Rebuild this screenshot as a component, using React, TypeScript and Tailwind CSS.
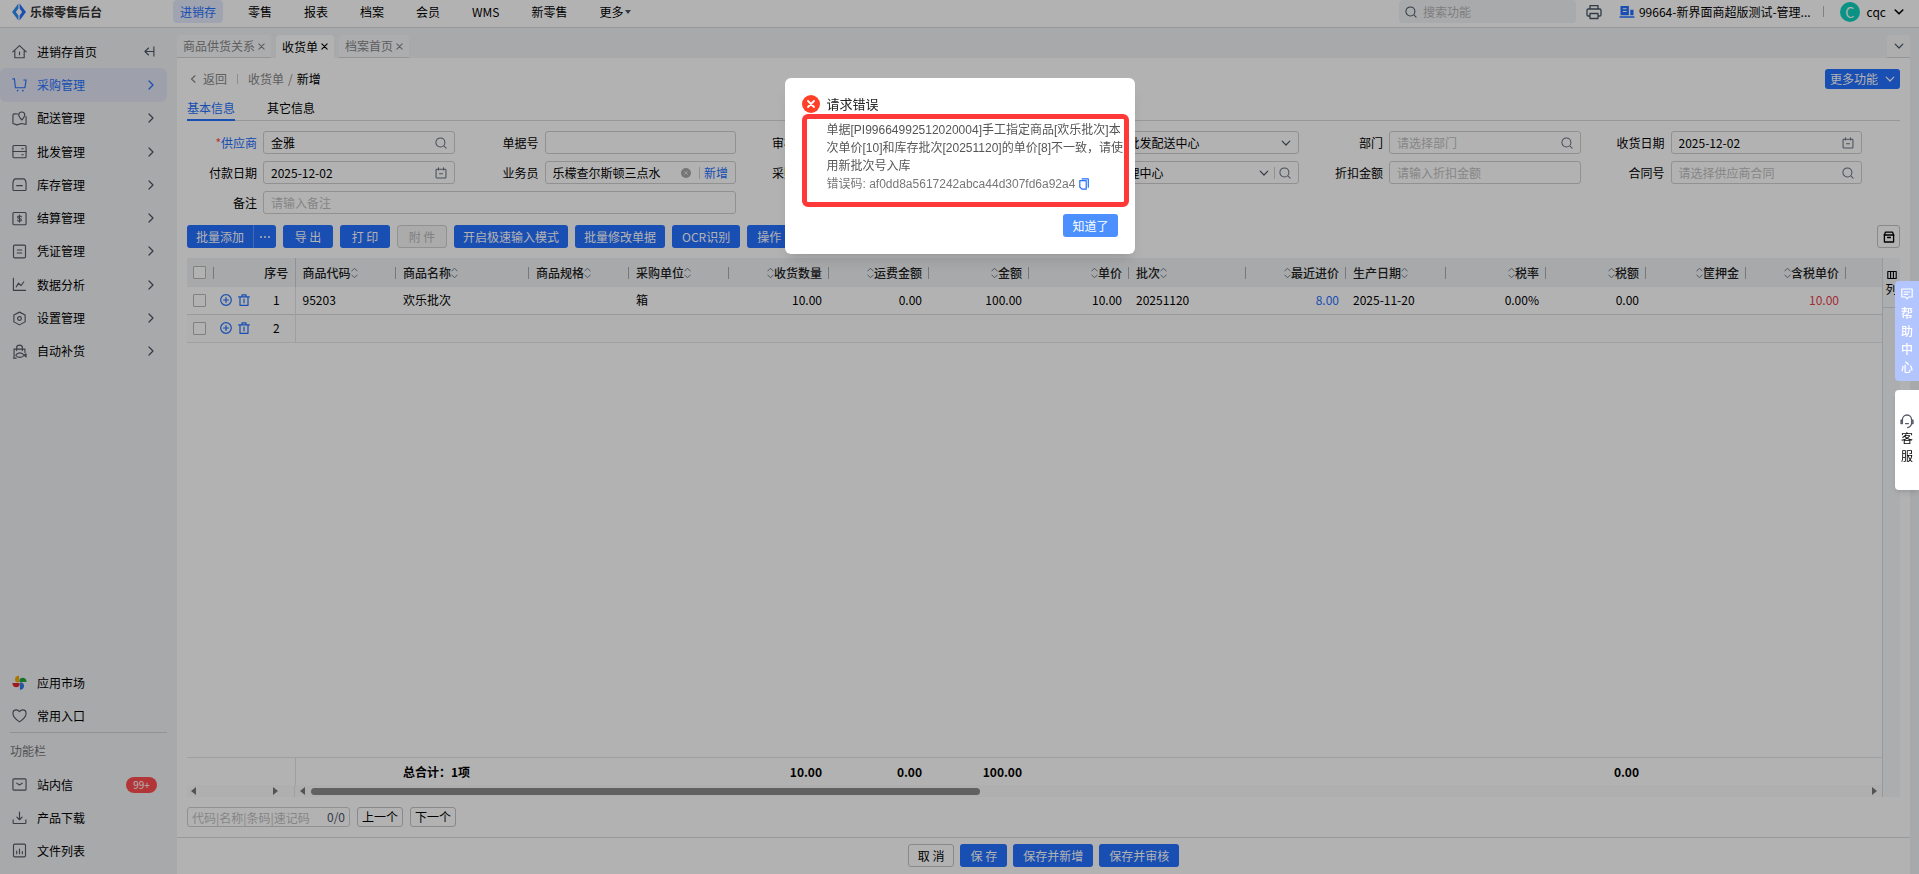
import type { ReactNode } from "react";
import clsx from "clsx";

type IconProps = { className?: string };

type SvgProps = IconProps & { children: ReactNode; box?: string; width?: number };

function Svg({ className, children, box = "0 0 16 16", width = 1.2 }: SvgProps) {
  return (
    <svg
      viewBox={box}
      fill="none"
      stroke="currentColor"
      strokeWidth={width}
      strokeLinecap="round"
      strokeLinejoin="round"
      className={clsx("shrink-0", className)}
      aria-hidden="true"
    >
      {children}
    </svg>
  );
}

const HomeIcon = ({ className }: IconProps) => (
  <Svg className={className}>
    <path d="M.8 8.4 8 1.8l7.200 6.600M3 7.200v7.400h10V7.200M8 8.600v2.800" />
  </Svg>
);
const CartIcon = ({ className }: IconProps) => (
  <Svg className={className}>
    <path d="M.8 2h1.800l1 9.400h10.200L15 3.200h-2.400" />
    <path d="M6 14.400v.1M11.600 14.400v.1" strokeWidth="1.800" />
  </Svg>
);
const MapIcon = ({ className }: IconProps) => (
  <Svg className={className}>
    <path d="M6 3.2 2.400 3C1.400 3 1 3.600 1 4.400v9l4.200 1.400 5-1.400 4.800 1V6" />
    <path d="M10.400 9.600C8.200 7.200 7.200 5.600 7.200 4.200a3.200 3.200 0 0 1 6.400 0c0 1.400-1 3-3.200 5.400Z" />
  </Svg>
);
const ServerIcon = ({ className }: IconProps) => (
  <Svg className={className}>
    <rect x="1" y="1.6" width="14" height="13" rx="1" />
    <path d="M1 8h14M10.500 5H12M10.500 11.500H12" />
  </Svg>
);
const BoxIcon = ({ className }: IconProps) => (
  <Svg className={className}>
    <path d="M1 6c.6-2.600 1.400-4 2.600-4h8.800C13.600 2 14.400 3.400 15 6v7.200c0 .8-.4 1.200-1.200 1.200H2.200c-.8 0-1.200-.4-1.200-1.200ZM5 9.200h6" />
  </Svg>
);
const MoneyIcon = ({ className }: IconProps) => (
  <Svg className={className}>
    <rect x="1" y="1.6" width="14" height="13" rx="1" />
    <path d="M10 6.200C9.600 5.500 9 5.300 8 5.300c-1.200 0-2 .5-2 1.300 0 2 4 .8 4 2.900 0 .8-.8 1.300-2 1.300-1 0-1.700-.3-2-1M8 4.300v7.500" />
  </Svg>
);
const NoteIcon = ({ className }: IconProps) => (
  <Svg className={className}>
    <rect x="1.6" y="1.2" width="12.8" height="13.6" rx="1.2" />
    <path d="M5.600 6.400h4.800M5.600 9.600h4.800" />
  </Svg>
);
const TrendIcon = ({ className }: IconProps) => (
  <Svg className={className}>
    <path d="M1.500 1.500v12.700h13M4.500 10.500l2.500-4 2.500 2.800 3-4" />
  </Svg>
);
const GearIcon = ({ className }: IconProps) => (
  <Svg className={className}>
    <path d="M8 1.200 14 4.200v7.400L8 14.800l-6-3.200V4.200Z" />
    <circle cx="8" cy="8" r="2" />
  </Svg>
);
const BagIcon = ({ className }: IconProps) => (
  <Svg className={className}>
    <path d="M2.200 14V5.400h11.600V9M5 7V3.600C5 2.200 6.200 1.200 8 1.200s3 1 3 2.400V7" />
    <path d="M4 12c2-3.400 6.500-3.400 9 0-2.500 3-7 3-9 0ZM13 12l2-1.600v3.400ZM1.500 15h3" />
  </Svg>
);
const HeartIcon = ({ className }: IconProps) => (
  <Svg className={className}>
    <path d="M8 14.800C3.200 11.600 1 8.800 1 5.800 1 3.600 2.600 2 4.600 2 6 2 7.200 2.700 8 4c.8-1.300 2-2 3.400-2C13.400 2 15 3.600 15 5.800c0 3-2.200 5.800-7 9Z" />
  </Svg>
);
const MailIcon = ({ className }: IconProps) => (
  <Svg className={className}>
    <rect x="1" y="2" width="14" height="12" rx="1" />
    <path d="m5 6.500 3 2 3-2" />
  </Svg>
);
const DownloadIcon = ({ className }: IconProps) => (
  <Svg className={className}>
    <path d="M8 2.200V10M5.200 7.600 8 10.400l2.800-2.800M1.200 10.400v3.200c0 .5.300.8.800.8h12c.5 0 .8-.3.800-.8v-3.200" />
  </Svg>
);
const FileChartIcon = ({ className }: IconProps) => (
  <Svg className={className}>
    <rect x="1.6" y="1.2" width="12.8" height="13.6" rx="1.2" />
    <path d="M5 8.500v3M8 6.500v5M11 9v2.500" />
  </Svg>
);
const MarketIcon = ({ className }: IconProps) => (
  <svg viewBox="0 0 16 16" className={clsx("shrink-0", className)} aria-hidden="true">
    <path d="M7.600 7.800V.8C4.600.8 3.200 2.600 3.200 4.800c0 1.600.8 2.600 1.800 3Z" fill="#f5a800" />
    <path d="M8 7.400h7.600c0-3-2-4.600-4.200-4.600C9.400 2.800 8 4 8 5.600Z" fill="#1fa83a" />
    <path d="M8.400 8v7.600c2.800 0 4.400-1.800 4.400-4 0-1.800-1-3.200-2.400-3.600Z" fill="#2f7be8" />
    <path d="M8 8.400H.4c0 2.800 1.800 4.600 4.200 4.600C6.600 13 8 11.800 8 10.200Z" fill="#e3262c" />
  </svg>
);
const SearchIcon = ({ className }: IconProps) => (
  <Svg className={className} width={1.4}>
    <circle cx="7.200" cy="7.200" r="6" />
    <path d="m12 12 2.800 2.800" />
  </Svg>
);
const CalendarIcon = ({ className }: IconProps) => (
  <Svg className={className} width={1.4}>
    <rect x="1.4" y="3" width="13.2" height="11.6" rx="1" />
    <path d="M4.600 1v3M11.400 1v3M6 9h4" />
  </Svg>
);
const ChevronDown = ({ className }: IconProps) => (
  <Svg className={className} box="0 0 10 10">
    <path d="M1.200 3.200 5 7l3.800-3.800" />
  </Svg>
);
const ChevronRight = ({ className }: IconProps) => (
  <Svg className={className} box="0 0 6 10">
    <path d="M1 1l4 4-4 4" />
  </Svg>
);
const CloseIcon = ({ className }: IconProps) => (
  <Svg className={className} box="0 0 8 8" width={1.3}>
    <path d="m1 1 6 6M7 1 1 7" />
  </Svg>
);
const SortIcon = () => (
  <Svg className="h-[12px] w-[7px] text-gray-500" box="0 0 7 12" width={0.9}>
    <path d="M.8 4 3.500 1.200 6.200 4M.8 8l2.700 2.800L6.200 8" />
  </Svg>
);
const PlusCircleIcon = () => (
  <Svg className="size-[12px]" box="0 0 12 12">
    <circle cx="6" cy="6" r="5.300" />
    <path d="M6 3.600v4.800M3.600 6h4.800" />
  </Svg>
);
const TrashIcon = () => (
  <Svg className="size-[12px]" box="0 0 12 12">
    <path d="M.6 2.800h10.800M4 2.600V.8h4v1.800M2 3v8.300h8V3M6 5.200v3.600" />
  </Svg>
);

const NAV = ["进销存", "零售", "报表", "档案", "会员", "WMS", "新零售"];

const MENU = [
  { label: "采购管理", Icon: CartIcon, active: true },
  { label: "配送管理", Icon: MapIcon },
  { label: "批发管理", Icon: ServerIcon },
  { label: "库存管理", Icon: BoxIcon },
  { label: "结算管理", Icon: MoneyIcon },
  { label: "凭证管理", Icon: NoteIcon },
  { label: "数据分析", Icon: TrendIcon },
  { label: "设置管理", Icon: GearIcon },
  { label: "自动补货", Icon: BagIcon },
];

const PAGE_TABS = [
  { label: "商品供货关系" },
  { label: "收货单", active: true },
  { label: "档案首页" },
];

type Column = {
  title: string;
  width: string;
  align?: "right";
  value?: string;
  total?: string;
  tone?: string;
};

const COLUMNS: Column[] = [
  { title: "商品代码", width: "w-[101px]", value: "95203" },
  { title: "商品名称", width: "w-[133px]", value: "欢乐批次", total: "总合计：1项" },
  { title: "商品规格", width: "w-[100px]" },
  { title: "采购单位", width: "w-[100px]", value: "箱" },
  { title: "收货数量", width: "w-[100px]", align: "right", value: "10.00", total: "10.00" },
  { title: "运费金额", width: "w-[100px]", align: "right", value: "0.00", total: "0.00" },
  { title: "金额", width: "w-[100px]", align: "right", value: "100.00", total: "100.00" },
  { title: "单价", width: "w-[100px]", align: "right", value: "10.00" },
  { title: "批次", width: "w-[117px]", value: "20251120" },
  { title: "最近进价", width: "w-[100px]", align: "right", value: "8.00", tone: "text-[#2470ff]" },
  { title: "生产日期", width: "w-[100px]", value: "2025-11-20" },
  { title: "税率", width: "w-[100px]", align: "right", value: "0.00%" },
  { title: "税额", width: "w-[100px]", align: "right", value: "0.00", total: "0.00" },
  { title: "筐押金", width: "w-[100px]", align: "right" },
  { title: "含税单价", width: "w-[100px]", align: "right", value: "10.00", tone: "text-[#e8404a]" },
];

function TopBar() {
  return (
    <header className="flex h-7 shrink-0 items-center border-b border-[#d9dbdf] bg-white pb-1">
      <div className="flex w-[173px] shrink-0 items-center gap-1 pl-3">
        <svg viewBox="0 0 14 18" className="h-[18px] w-[14px]" aria-hidden="true">
          <path d="M6.400.4v5.200L3.800 9l2.600 3.400v5.200L.6 9.800a1.200 1.200 0 0 1 0-1.600Z" fill="#2f8bf5" />
          <path d="M7.600.4v5.200L10.200 9l-2.600 3.400v5.200l5.800-7.800a1.200 1.200 0 0 0 0-1.600Z" fill="#2470ff" />
        </svg>
        <span className="font-bold text-[#333]">乐檬零售后台</span>
      </div>
      <nav className="flex items-center gap-[18px]">
        {NAV.map((item, index) => (
          <a
            key={item}
            href="#"
            className={clsx(
              "flex h-[23px] items-center rounded px-[7px]",
              index === 0 && "bg-[#e4ebfd] text-[#2470ff]",
            )}
          >
            {item}
          </a>
        ))}
        <button type="button" className="flex h-[23px] items-center gap-px px-[7px]">
          更多
          <svg viewBox="0 0 6 4" className="h-1 w-1.5 fill-gray-600" aria-hidden="true">
            <path d="M0 0h6L3 4Z" />
          </svg>
        </button>
      </nav>
      <div className="ml-auto flex items-center pr-[15px]">
        <div className="flex h-[23px] w-[177px] items-center gap-1.5 rounded bg-[#f2f4f7] px-1.5">
          <SearchIcon className="size-[12px] text-gray-600" />
          <input
            aria-label="搜索功能"
            placeholder="搜索功能"
            className="h-full min-w-0 flex-1 bg-transparent outline-none placeholder:text-[#b5b5b5]"
          />
        </div>
        <Svg className="ml-[10px] size-4 text-gray-600" width={1.3}>
          <path d="M4 5V1.600h8V5M4 12H2.200C1.400 12 1 11.600 1 10.800V6.200C1 5.400 1.400 5 2.200 5h11.600c.8 0 1.200.4 1.200 1.200v4.600c0 .8-.4 1.200-1.200 1.200H12M4 9.500h8v5H4Z" />
        </Svg>
        <svg viewBox="0 0 16 14" className="ml-[17px] h-[13px] w-4" aria-hidden="true">
          <path d="M1 1h9v10H1ZM11.500 5H15v6h-3.500ZM0 12h16v1.600H0Z" fill="#2470ff" />
          <path d="M3.500 4h4M3.500 7h4" stroke="#fff" strokeWidth="1.2" />
        </svg>
        <span className="ml-1 whitespace-nowrap">99664-新界面商超版测试-管理...</span>
        <span className="ml-3 h-[11px] w-px bg-[#bbb]" />
        <span className="ml-4 flex size-5 items-center justify-center rounded-full bg-[#0fd3bd] text-sm text-white">
          C
        </span>
        <button type="button" className="ml-[7px] flex items-center gap-2">
          cqc
          <Svg className="size-[10px]" box="0 0 10 10" width={1.6}>
            <path d="M1.200 3 5 6.800 8.800 3" />
          </Svg>
        </button>
      </div>
    </header>
  );
}

function Sidebar() {
  return (
    <aside className="flex w-[177px] shrink-0 flex-col pt-[7px] pr-[10px] pb-[7px]">
      <nav className="flex h-[333px] flex-col">
        <a href="#" className="flex flex-1 items-center pr-3 pl-3">
          <HomeIcon className="size-[15px] text-[#555866]" />
          <span className="ml-[10px]">进销存首页</span>
          <Svg className="ml-auto size-[11px] text-gray-600" box="0 0 12 12">
            <path d="M5 2.200 1 6l4 3.800M1 6h9.800M10.800 1v10" />
          </Svg>
        </a>
        {MENU.map(({ label, Icon, active }) => (
          <a
            key={label}
            href="#"
            className={clsx(
              "flex flex-1 items-center rounded-md pr-[13px] pl-3",
              active ? "bg-[#e2e7f5] text-[#2470ff]" : "text-black",
            )}
          >
            <Icon className={clsx("size-[15px]", !active && "text-[#555866]")} />
            <span className="ml-[10px]">{label}</span>
            <ChevronRight className={clsx("ml-auto h-[10px] w-1.5", !active && "text-gray-600")} />
          </a>
        ))}
      </nav>
      <div className="mt-auto flex flex-col">
        <a href="#" className="flex h-[33px] items-center gap-[10px] pl-3">
          <MarketIcon className="size-[15px]" />
          应用市场
        </a>
        <a href="#" className="flex h-[33px] items-center gap-[10px] pl-3">
          <HeartIcon className="size-[15px] text-[#555866]" />
          常用入口
        </a>
        <h2 className="ml-[10px] flex h-9 items-center border-t border-[#cfd1d4] text-[#777]">功能栏</h2>
        <a href="#" className="flex h-[33px] items-center gap-[10px] pr-[10px] pl-3">
          <MailIcon className="size-[15px] text-[#555866]" />
          站内信
          <span className="ml-auto flex h-4 w-[31px] items-center justify-center rounded-full bg-[#ff4d4f] text-[10px] text-white">
            99+
          </span>
        </a>
        <a href="#" className="flex h-[33px] items-center gap-[10px] pl-3">
          <DownloadIcon className="size-[15px] text-[#555866]" />
          产品下载
        </a>
        <a href="#" className="flex h-[33px] items-center gap-[10px] pl-3">
          <FileChartIcon className="size-[15px] text-[#555866]" />
          文件列表
        </a>
      </div>
    </aside>
  );
}

type FieldProps = {
  id: string;
  label: string;
  value?: string;
  placeholder?: string;
  required?: boolean;
  options?: boolean;
  wide?: boolean;
  children?: ReactNode;
};

function Field({ id, label, value, placeholder, required, options, wide, children }: FieldProps) {
  return (
    <div className={clsx("flex h-[23px] items-center pr-[14px]", wide && "col-span-2")}>
      <label htmlFor={id} className={clsx("w-[70px] shrink-0 text-right", required && "text-[#2470ff]")}>
        {required && <span className="text-[#ff4d4f]">*</span>}
        {label}
      </label>
      <div className="ml-1.5 flex h-full min-w-0 flex-1 items-center gap-1 rounded-[3px] border border-[#d0d0d0] pr-[7px] pl-[7px]">
        {options ? (
          <select id={id} className="h-full min-w-0 flex-1 appearance-none bg-transparent outline-none">
            <option>{value}</option>
          </select>
        ) : (
          <input
            id={id}
            defaultValue={value}
            placeholder={placeholder}
            className="h-full min-w-0 flex-1 bg-transparent outline-none placeholder:text-[#bfbfbf]"
          />
        )}
        {children}
      </div>
    </div>
  );
}

function ReceiptForm() {
  return (
    <form className="mt-[10px] grid grid-cols-6 gap-y-[7px] pr-6">
      <Field id="supplier" label="供应商" value="金雅" required>
        <SearchIcon className="size-[12px] text-gray-500" />
      </Field>
      <Field id="billNo" label="单据号" />
      <Field id="auditDate" label="审核日期" />
      <Field id="warehouse" label="收货门店" value="总批发配送中心" options>
        <ChevronDown className="size-[10px] text-gray-600" />
      </Field>
      <Field id="department" label="部门" placeholder="请选择部门">
        <SearchIcon className="size-[12px] text-gray-500" />
      </Field>
      <Field id="receiveDate" label="收货日期" value="2025-12-02">
        <CalendarIcon className="size-[12px] text-gray-500" />
      </Field>
      <Field id="payDate" label="付款日期" value="2025-12-02">
        <CalendarIcon className="size-[12px] text-gray-500" />
      </Field>
      <Field id="salesman" label="业务员" value="乐檬查尔斯顿三点水">
        <button
          type="button"
          aria-label="清除"
          className="flex size-[10px] items-center justify-center rounded-full bg-[#aaa] text-white"
        >
          <CloseIcon className="size-1" />
        </button>
        <span className="ml-1 h-3 w-px bg-[#d0d0d0]" />
        <button type="button" className="text-[#2470ff]">新增</button>
      </Field>
      <Field id="purchaseOrder" label="采购订单" />
      <Field id="store" label="仓库" value="管理中心" options>
        <ChevronDown className="size-[10px] text-gray-600" />
        <span className="ml-px h-3 w-px bg-[#d0d0d0]" />
        <SearchIcon className="size-[12px] text-gray-500" />
      </Field>
      <Field id="discount" label="折扣金额" placeholder="请输入折扣金额" />
      <Field id="contract" label="合同号" placeholder="请选择供应商合同">
        <SearchIcon className="size-[12px] text-gray-500" />
      </Field>
      <Field id="remark" label="备注" placeholder="请输入备注" wide />
    </form>
  );
}

function Toolbar() {
  const primary = "h-[23px] rounded-[3px] bg-[#2470ff] text-white";
  return (
    <div className="mt-[11px] flex gap-[7px]">
      <div className="flex">
        <button type="button" className="h-[23px] rounded-l-[3px] bg-[#2470ff] px-[9px] text-white">
          批量添加
        </button>
        <button
          type="button"
          aria-label="更多添加方式"
          className="flex h-[23px] w-[23px] items-center justify-center gap-0.5 rounded-r-[3px] border-l border-[#5e97ff] bg-[#2470ff]"
        >
          <i className="size-0.5 rounded-full bg-white" />
          <i className="size-0.5 rounded-full bg-white" />
          <i className="size-0.5 rounded-full bg-white" />
        </button>
      </div>
      <button type="button" className={clsx(primary, "w-[50px]")}>导 出</button>
      <button type="button" className={clsx(primary, "w-[50px]")}>打 印</button>
      <button
        type="button"
        disabled
        className="h-[23px] w-[50px] rounded-[3px] border border-[#d0d0d0] bg-[#f5f5f5] text-[#b8b8b8]"
      >
        附 件
      </button>
      <button type="button" className={clsx(primary, "px-[9px]")}>开启极速输入模式</button>
      <button type="button" className={clsx(primary, "px-[9px]")}>批量修改单据</button>
      <button type="button" className={clsx(primary, "px-[10px]")}>OCR识别</button>
      <button type="button" className={clsx(primary, "flex items-center gap-2 px-[10px]")}>
        操作
        <ChevronDown className="size-[10px]" />
      </button>
      <button
        type="button"
        aria-label="归档"
        className="ml-auto flex h-[23px] w-[23px] items-center justify-center rounded-[3px] border border-[#c4c4c4]"
      >
        <Svg className="size-[12px]" box="0 0 12 12" width={1.3}>
          <path d="M1 4h10M1.400 4v7h9.200V4l-1-2.800H2.400ZM4.600 6.500h2.800" />
        </Svg>
      </button>
    </div>
  );
}

const GridCols = () => (
  <colgroup>
    <col className="w-[27px]" />
    <col className="w-[44px]" />
    <col className="w-[37px]" />
    {COLUMNS.map((column) => (
      <col key={column.title} className={column.width} />
    ))}
    <col />
  </colgroup>
);

const CHECKBOX = "block size-[13px] appearance-none rounded-[1px] border border-[#b8b8b8] bg-white";

function RowHead({ index }: { index: number }) {
  return (
    <>
      <td className="pl-1.5">
        <input type="checkbox" aria-label={`选择第${index}行`} className={CHECKBOX} />
      </td>
      <td>
        <div className="flex items-center gap-1.5 pl-1.5 text-[#2470ff]">
          <button type="button" aria-label="添加行"><PlusCircleIcon /></button>
          <button type="button" aria-label="删除行"><TrashIcon /></button>
        </div>
      </td>
      <td className="border-r border-[#e2e4e8] text-center">{index}</td>
    </>
  );
}

function ItemTable() {
  return (
    <table className="w-full table-fixed border-collapse">
      <GridCols />
      <thead>
        <tr className="h-[29px] bg-[#f0f2f5] text-[#222]">
          <th className="pl-1.5">
            <div className="flex items-center justify-between">
              <input type="checkbox" aria-label="全选" className={CHECKBOX} />
              <span className="h-3 w-px bg-[#a9adb5]" />
            </div>
          </th>
          <th />
          <th className="border-r border-[#cdd0d6] font-medium">序号</th>
          {COLUMNS.map(({ title, align }) => (
            <th key={title} className="pl-[7px] font-medium">
              <div className={clsx("flex items-center", align && "justify-end")}>
                {align && <SortIcon />}
                {title}
                {!align && <SortIcon />}
                <span className={clsx("h-3 w-px bg-[#a9adb5]", align ? "ml-1.5" : "ml-auto")} />
              </div>
            </th>
          ))}
          <th />
        </tr>
      </thead>
      <tbody>
        <tr className="h-[27px] border-b border-[#d9dbdf]">
          <RowHead index={1} />
          {COLUMNS.map(({ title, align, value, tone }) => (
            <td key={title} className={clsx("px-[7px]", align && "text-right", tone)}>
              {value}
            </td>
          ))}
          <td />
        </tr>
        <tr className="h-[28px] border-b border-[#e6e7ea] bg-[#fcfcfc]">
          <RowHead index={2} />
          <td colSpan={COLUMNS.length + 1} />
        </tr>
      </tbody>
    </table>
  );
}

const Arrow = ({ left }: { left?: boolean }) => (
  <svg viewBox="0 0 5 8" className="h-2 w-[5px] shrink-0 fill-[#777]" aria-hidden="true">
    <path d={left ? "M5 0v8L0 4Z" : "M0 0v8l5-4Z"} />
  </svg>
);

function TotalRow() {
  return (
    <div className="mt-auto border-t border-[#e2e4e8]">
      <table className="w-full table-fixed border-collapse">
        <GridCols />
        <tbody>
          <tr className="h-[27px] font-bold">
            <td colSpan={3} className="border-r border-[#e2e4e8]" />
            {COLUMNS.map(({ title, align, total }) => (
              <td key={title} className={clsx("px-[7px] whitespace-nowrap", align && "text-right")}>
                {total}
              </td>
            ))}
            <td />
          </tr>
        </tbody>
      </table>
      <div className="flex h-3 items-center bg-[#fbfbfb]">
        <div className="flex h-full w-[108px] shrink-0 items-center justify-between border-r border-[#e2e4e8] pr-4 pl-1">
          <Arrow left />
          <Arrow />
        </div>
        <div className="flex flex-1 items-center pr-[5px] pl-[5px]">
          <Arrow left />
          <div className="mx-1.5 flex-1">
            <div className="h-[7px] w-[43%] rounded-full bg-[#8b8b8b]" />
          </div>
          <Arrow />
        </div>
      </div>
    </div>
  );
}

function Finder() {
  const step = "h-5 rounded-[3px] border border-[#c4c4c4] px-1";
  return (
    <div className="mt-[10px] flex gap-[7px]">
      <div className="flex h-5 w-[163px] items-center rounded-[3px] border border-[#d0d0d0] px-1">
        <input
          aria-label="查找商品"
          placeholder="代码|名称|条码|速记码"
          className="h-full min-w-0 flex-1 bg-transparent outline-none placeholder:text-[#bfbfbf]"
        />
        <span className="text-gray-600">0/0</span>
      </div>
      <button type="button" className={step}>上一个</button>
      <button type="button" className={step}>下一个</button>
    </div>
  );
}

function ErrorDialog() {
  return (
    <div className="fixed inset-0 z-10 flex items-start justify-center bg-black/30 pt-[78px]">
      <div
        role="alertdialog"
        aria-labelledby="error-title"
        className="relative w-[350px] rounded-md bg-white px-[17px] pt-4 pb-[17px] shadow-lg"
      >
        <div className="flex h-[19px] items-center gap-[7px]">
          <span className="flex size-[18px] items-center justify-center rounded-full bg-[#ff4026] text-white">
            <Svg className="size-2" box="0 0 8 8" width={1.8}>
              <path d="m1 1 6 6M7 1 1 7" />
            </Svg>
          </span>
          <h1 id="error-title" className="text-[13px] text-[#222]">请求错误</h1>
        </div>
        <div className="-mr-2 mt-2 pl-[25px] font-['Liberation_Sans','Noto_Sans_CJK_SC',sans-serif] leading-[18px] text-[#555]">
          <p className="whitespace-nowrap">
            单据[PI99664992512020004]手工指定商品[欢乐批次]本
            <br />
            次单价[10]和库存批次[20251120]的单价[8]不一致，请使
            <br />
            用新批次号入库
          </p>
          <p className="flex items-center gap-1 text-[#777]">
            错误码: af0dd8a5617242abca44d307fd6a92a4
            <button type="button" aria-label="复制错误码" className="text-[#2470ff]">
              <Svg className="h-3 w-[10px]" box="0 0 10 12">
                <path d="M3 .8h6.300v8.400M.8 2.600h6.400v8.600H3L.8 9Z" />
              </Svg>
            </button>
          </p>
        </div>
        <div className="mt-[21px] flex justify-end">
          <button type="button" className="h-[23px] rounded-[3px] bg-[#4c90ff] px-[9px] text-white">
            知道了
          </button>
        </div>
        <div className="pointer-events-none absolute top-9 right-1.5 left-[17px] h-[93px] rounded-md border-5 border-[#ff3838]" />
      </div>
    </div>
  );
}

function FloatingTools() {
  return (
    <div className="fixed top-[281px] right-0 z-20 flex w-6 flex-col gap-[9px] leading-[18px]">
      <button
        type="button"
        className="flex h-[100px] flex-col items-center rounded-l bg-[#b3c5ff] px-1.5 pt-[7px] font-medium text-white"
      >
        <Svg className="mb-1 size-3" box="0 0 12 12">
          <path d="M.8 1h10.400v8H7.500L6 11 4.500 9H.8ZM3.200 4h5.600M3.200 6.400h3.600" />
        </Svg>
        帮助中心
      </button>
      <button
        type="button"
        className="flex h-[100px] flex-col items-center rounded-l bg-white px-1.5 pt-6 shadow-md"
      >
        <Svg className="h-[15px] w-[14px] text-[#555866]" box="0 0 14 15" width={1.3}>
          <path d="M2.400 9V5.800C2.400 3 4.400 1 7 1s4.600 2 4.600 4.800V9c0 2.600-1.600 4-4 4.600M2.400 6.200H1v3.400h1.400M11.600 6.200H13v3.400h-1.400M5.600 9.600h2.800" />
        </Svg>
        客服
      </button>
    </div>
  );
}

export default function App() {
  const action = "h-[23px] rounded-[3px] bg-[#2470ff] px-[10px] text-white";
  return (
    <div className="flex h-screen flex-col overflow-hidden bg-[#f0f2f5] font-['Noto_Sans_CJK_SC',sans-serif] text-xs text-black">
      <TopBar />
      <div className="flex min-h-0 flex-1">
        <Sidebar />
        <main className="flex min-w-0 flex-1 flex-col pr-[9px]">
          <div className="flex h-[30px] shrink-0 items-end gap-[5px]">
            {PAGE_TABS.map(({ label, active }) => (
              <button
                key={label}
                type="button"
                className={clsx(
                  "flex h-[23px] items-center gap-[3px] rounded-t px-1.5",
                  active ? "bg-white" : "border-b border-[#d4d6d9] bg-[#f7f8fa] text-[#888]",
                )}
              >
                {label}
                <CloseIcon className="size-[7px]" />
              </button>
            ))}
            <button
              type="button"
              aria-label="全部标签"
              className="ml-auto flex h-[23px] w-[23px] items-center justify-center rounded-t border-b border-[#d4d6d9] bg-[#f9fafb] text-gray-600"
            >
              <ChevronDown className="size-[10px]" />
            </button>
          </div>

          <section className="flex min-h-0 flex-1 flex-col bg-white">
            <div className="flex min-h-0 flex-1 flex-col px-[10px]">
              <div className="flex h-[42px] shrink-0 items-center">
                <a href="#" className="flex items-center gap-[7px] pl-[3px] text-[#888]">
                  <Svg className="h-2 w-1.5" box="0 0 6 8">
                    <path d="M5 .8 1.500 4 5 7.200" />
                  </Svg>
                  返回
                </a>
                <span className="mx-[10px] h-[10px] w-px bg-[#ccc]" />
                <a href="#" className="text-[#888]">收货单</a>
                <span className="mx-1 text-[#888]">/</span>
                <span>新增</span>
                <button
                  type="button"
                  className="ml-auto flex h-5 items-center gap-[7px] rounded-[3px] bg-[#2470ff] px-[5px] text-white"
                >
                  更多功能
                  <ChevronDown className="size-[10px]" />
                </button>
              </div>
              <div className="flex h-[21px] shrink-0 gap-8 border-b border-[#d9d9d9]">
                <button type="button" className="h-[21px] border-b-2 border-[#2470ff] pb-[3px] text-[#2470ff]">
                  基本信息
                </button>
                <button type="button" className="h-[21px] pb-[5px]">其它信息</button>
              </div>
              <ReceiptForm />
              <Toolbar />
              <div className="mt-[10px] flex min-h-0 flex-1">
                <div className="flex min-w-0 flex-1 flex-col">
                  <ItemTable />
                  <TotalRow />
                </div>
                <div className="w-[18px] shrink-0 border-l border-[#d9dbdf] bg-[#f7f8fa]">
                  <button
                    type="button"
                    className="flex h-[50px] w-full flex-col items-center gap-px border-b border-[#d9dbdf] pt-3"
                  >
                    <Svg className="size-[10px]" box="0 0 10 10" width={1.1}>
                      <path d="M.8 1.500h8.400v7H.8ZM.8 1.500h8.400M3.600 1.500v7M6.400 1.500v7" />
                    </Svg>
                    列
                  </button>
                </div>
              </div>
              <Finder />
            </div>
            <footer className="mt-[10px] flex h-[37px] shrink-0 justify-center gap-1.5 border-t border-[#d9dbdf] pt-1.5">
              <button type="button" className="h-[23px] rounded-[3px] border border-[#c4c4c4] px-[9px]">取 消</button>
              <button type="button" className={action}>保 存</button>
              <button type="button" className={action}>保存并新增</button>
              <button type="button" className={action}>保存并审核</button>
            </footer>
          </section>
        </main>
      </div>
      <ErrorDialog />
      <FloatingTools />
    </div>
  );
}
